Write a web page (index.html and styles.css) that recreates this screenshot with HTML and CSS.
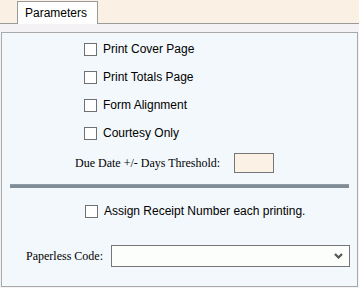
FILE: index.html
```html
<html>
  <head>
    <meta charset="UTF-8">
    <title>Parameters</title>
    <link rel="stylesheet" href="styles.css">
  </head>
  <body>
    <div class="tabbar">
      <div class="tab">Parameters</div>
    </div>

    <div class="sheet">
      <form class="params">
        <div class="checks">
          <label class="chk"><input type="checkbox" class="cb"> Print Cover Page</label>
          <label class="chk"><input type="checkbox" class="cb"> Print Totals Page</label>
          <label class="chk"><input type="checkbox" class="cb"> Form Alignment</label>
          <label class="chk"><input type="checkbox" class="cb"> Courtesy Only</label>
        </div>

        <div class="due">
          <span class="lbl due-lbl">Due Date +/- Days Threshold:</span>
          <input type="text" class="days">
        </div>

        <div class="sep"></div>

        <label class="chk assign"><input type="checkbox" class="cb"> Assign Receipt Number each printing.</label>

        <div class="paperless">
          <span class="lbl pl-lbl">Paperless Code:</span>
          <div class="sel-wrap">
            <select class="sel"><option></option></select>
            <svg class="arrow" width="9" height="6" viewBox="0 0 9 6">
              <path d="M1 1 L4.5 4.5 L8 1" fill="none" stroke="#555" stroke-width="2.2"/>
            </svg>
          </div>
        </div>
      </form>
    </div>
  </body>
</html>
```

FILE: styles.css
```css
body {
  margin: 0;
  background: #f4f2f4;
  font-family: 'Liberation Sans', Arial, sans-serif;
  font-size: 12px;
  color: #000;
}

/* tab strip */
.tabbar {
  height: 23px;
  background: #faf0e3;
  border-bottom: 1px solid #9a9a9a;
  display: flex;
  align-items: flex-end;
}

.tab {
  box-sizing: border-box;
  margin-left: 17px;
  margin-bottom: -1px;
  width: 81px;
  height: 23px;
  padding: 4px 0 0 7px;
  background: #fdfefd;
  border: 1px solid #9a9a9a;
  border-bottom: none;
}

.sheet {
  padding: 8px 1px 1px 1px;
}

.params {
  margin: 0;
  height: 253px;
  background: #f3f8fc;
  border: 1px solid #a9a9a9;
}

.checks {
  padding: 2px 0 0 82px;
}

.chk {
  display: flex;
  align-items: center;
  height: 28px;
}

.cb {
  -webkit-appearance: none;
  appearance: none;
  box-sizing: border-box;
  width: 13px;
  height: 13px;
  margin: 0 6px 0 0;
  background: #fff;
  border: 1px solid #707070;
}

.lbl {
  font-family: 'Liberation Serif', 'Times New Roman', serif;
  font-size: 12px;
}

.due {
  display: flex;
  align-items: center;
  height: 32px;
  padding-left: 73px;
  gap: 12px;
}

.due-lbl {
  width: 147px;
}

.days {
  box-sizing: border-box;
  width: 40px;
  height: 20px;
  margin: 0;
  background: #fcf1e5;
  border: 1px solid #767676;
}

.sep {
  height: 4px;
  margin: 5px 8px 0 8px;
  background: #808d96;
  border-top: 1px solid #8f9ca5;
  box-sizing: border-box;
}

.assign {
  height: 46px;
  padding-left: 83px;
}

.paperless {
  display: flex;
  align-items: center;
  gap: 8px;
  padding: 0 0 0 24px;
  margin-top: 11px;
}

.pl-lbl {
  width: 77px;
}

.sel-wrap {
  position: relative;
}

.sel {
  -webkit-appearance: none;
  appearance: none;
  box-sizing: border-box;
  width: 239px;
  height: 22px;
  margin: 0;
  background: #fbfefb;
  border: 1px solid #767676;
  border-radius: 0;
}

.arrow {
  position: absolute;
  right: 7px;
  top: 8px;
}
```
